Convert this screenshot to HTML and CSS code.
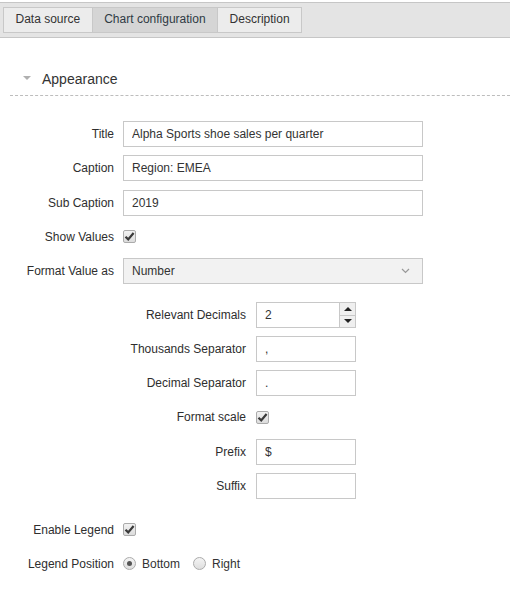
FILE: index.html
```html
<!DOCTYPE html>
<html lang="en">
<head>
    <meta charset="UTF-8">
    <meta name="viewport" content="width=device-width, initial-scale=1.0">
    <title>Chart configuration</title>
    <link rel="stylesheet" href="styles.css">
</head>
<body>

<div class="tabbar">
    <div class="tab">Data source</div>
    <div class="tab active">Chart configuration</div>
    <div class="tab">Description</div>
</div>

<div class="section-head"><span class="caret"></span>Appearance</div>

<div class="form main">
    <label>Title</label>
    <input class="field" type="text" value="Alpha Sports shoe sales per quarter">

    <label>Caption</label>
    <input class="field" type="text" value="Region: EMEA">

    <label>Sub Caption</label>
    <input class="field" type="text" value="2019">

    <label>Show Values</label>
    <span class="check"><svg width="11" height="11" viewBox="0 0 11 11"><path d="M1.5 5.8 L4.2 8.4 L9.6 2" fill="none" stroke="#3a3a3a" stroke-width="2.2"/></svg></span>

    <label>Format Value as</label>
    <div class="select">Number<svg class="chevron" width="9" height="6" viewBox="0 0 9 6"><path d="M1 1 L4.5 4.5 L8 1" fill="none" stroke="#999" stroke-width="1.2"/></svg></div>
</div>

<div class="form sub">
    <label>Relevant Decimals</label>
    <div class="spin">
        <span class="spin-val">2</span>
        <span class="spin-btns">
            <span class="spin-btn"><span class="arrow up"></span></span>
            <span class="spin-btn"><span class="arrow down"></span></span>
        </span>
    </div>

    <label>Thousands Separator</label>
    <input class="field" type="text" value=",">

    <label>Decimal Separator</label>
    <input class="field" type="text" value=".">

    <label>Format scale</label>
    <span class="check"><svg width="11" height="11" viewBox="0 0 11 11"><path d="M1.5 5.8 L4.2 8.4 L9.6 2" fill="none" stroke="#3a3a3a" stroke-width="2.2"/></svg></span>

    <label>Prefix</label>
    <input class="field" type="text" value="$">

    <label>Suffix</label>
    <input class="field" type="text" value="">
</div>

<div class="form main legend">
    <label>Enable Legend</label>
    <span class="check"><svg width="11" height="11" viewBox="0 0 11 11"><path d="M1.5 5.8 L4.2 8.4 L9.6 2" fill="none" stroke="#3a3a3a" stroke-width="2.2"/></svg></span>

    <label>Legend Position</label>
    <div class="radios">
        <span class="radio checked"></span><span class="radio-text">Bottom</span>
        <span class="radio"></span><span class="radio-text">Right</span>
    </div>
</div>

</body>
</html>
```

FILE: styles.css
```css
body {
    font-family: "Liberation Sans", Arial, sans-serif;
    font-size: 12px;
    color: #333;
    background-color: #fff;
    margin: 0;
}

.tabbar {
    display: flex;
    margin-top: 2px;
    padding: 4px 3px 0 3px;
    box-sizing: border-box;
    height: 36px;
    background-color: #e4e4e4;
    border-top: 1px solid #c6c6c6;
    border-bottom: 1px solid #c6c6c6;
}

.tab {
    height: 26px;
    box-sizing: border-box;
    line-height: 23px;
    padding: 0 11.5px;
    background-color: #ececec;
    border: 1px solid #c8c8c8;
    color: #333;
}

.tab + .tab {
    margin-left: -1px;
}

.tab.active {
    background-color: #d5d5d5;
    color: #2f3a44;
}

.section-head {
    display: flex;
    align-items: center;
    margin: 25px 0 0 10px;
    height: 32px;
    padding-left: 13px;
    font-size: 14px;
    color: #333;
    border-bottom: 1px dashed #bdbdbd;
}

.caret {
    width: 0;
    height: 0;
    border-left: 4px solid transparent;
    border-right: 4px solid transparent;
    border-top: 4px solid #b0b0b0;
    margin-right: 11px;
    margin-top: -2px;
}

.form {
    display: grid;
    grid-auto-rows: 26px;
    row-gap: 8.3px;
    align-items: center;
}

.form label {
    text-align: right;
    color: #2e2e2e;
}

.main {
    grid-template-columns: 114px 300px;
    column-gap: 9px;
    margin-top: 25px;
}

.sub {
    grid-template-columns: 246px 100px;
    column-gap: 10px;
    margin-top: 18px;
    row-gap: 8.1px;
}

.legend {
    margin-top: 18px;
}

.field {
    height: 26px;
    box-sizing: border-box;
    border: 1px solid #c8c8c8;
    border-radius: 0;
    padding: 0 8px;
    font-family: inherit;
    font-size: 12px;
    color: #333;
    outline: none;
    width: 100%;
}

.select {
    display: flex;
    align-items: center;
    justify-content: space-between;
    height: 26px;
    box-sizing: border-box;
    border: 1px solid #c8c8c8;
    background-color: #f2f2f2;
    padding: 0 12px 0 8px;
}

.check {
    width: 13px;
    height: 13px;
    box-sizing: border-box;
    border: 1px solid #ababab;
    border-radius: 2px;
    background: linear-gradient(#f2f2f2, #dcdcdc);
    display: flex;
    align-items: center;
    justify-content: center;
}

.spin {
    display: flex;
    height: 26px;
    box-sizing: border-box;
    border: 1px solid #c8c8c8;
}

.spin-val {
    flex: 1;
    line-height: 24px;
    padding-left: 8px;
}

.spin-btns {
    display: flex;
    flex-direction: column;
    width: 15px;
    border-left: 1px solid #c8c8c8;
}

.spin-btn {
    flex: 1;
    display: flex;
    align-items: center;
    justify-content: center;
    background-color: #efefef;
}

.spin-btn + .spin-btn {
    border-top: 1px solid #c8c8c8;
}

.arrow {
    width: 0;
    height: 0;
    border-left: 4px solid transparent;
    border-right: 4px solid transparent;
}

.arrow.up {
    border-bottom: 4px solid #222;
}

.arrow.down {
    border-top: 4px solid #222;
}

.radios {
    display: flex;
    align-items: center;
}

.radio {
    width: 13px;
    height: 13px;
    box-sizing: border-box;
    border: 1px solid #ababab;
    border-radius: 50%;
    background: linear-gradient(#f4f4f4, #dedede);
    display: flex;
    align-items: center;
    justify-content: center;
}

.radio.checked::after {
    content: "";
    width: 5px;
    height: 5px;
    border-radius: 50%;
    background-color: #555;
}

.radio-text {
    margin: 0 13px 0 6px;
}
```
